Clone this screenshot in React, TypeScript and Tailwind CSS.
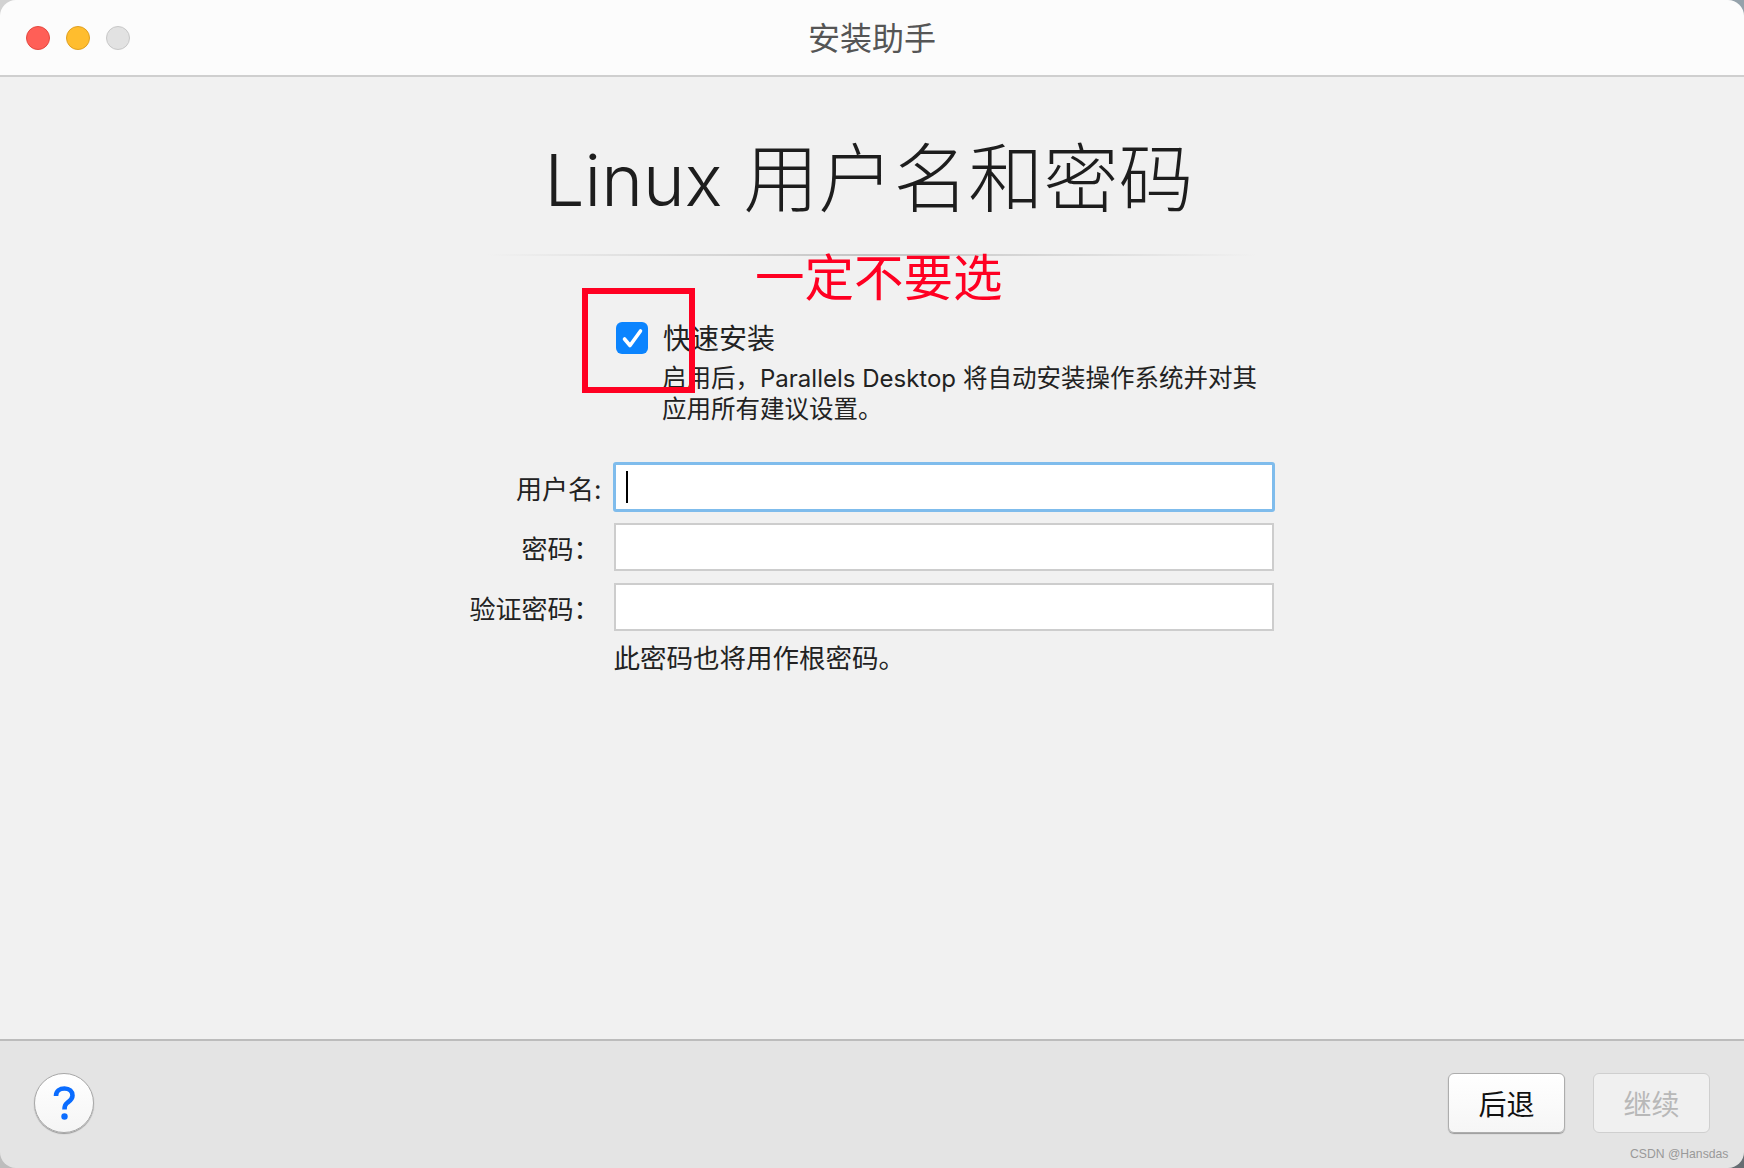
const FONT = "font-['Inter','Noto_Sans_CJK_SC',sans-serif]";

function Field({ label, focused, colonGap }: { label: string; focused?: boolean; colonGap?: boolean }) {
  return (
    <div className="flex h-[48px] items-center">
      <div className={`mt-[5px] w-[164px] text-right text-[26px] leading-[48px] text-[#222] ${colonGap ? "pr-[12px]" : "pr-[14px]"}`}>
        {label}
      </div>
      {focused ? (
        <div className="ml-[-1px] flex h-[50px] w-[662px] shrink-0 items-center rounded-[3px] border-[3px] border-[#7fbcec] bg-white pl-[10px]">
          <div className="h-[32px] w-[2px] bg-black" />
        </div>
      ) : (
        <div className="h-[48px] w-[660px] border-2 border-[#cdcdcd] bg-white" />
      )}
    </div>
  );
}

export default function App() {
  return (
    <div className={`relative h-[1168px] w-[1744px] overflow-hidden bg-[#e8e8e8] ${FONT}`}>
      {/* what shows behind the rounded corners of the window */}
      <div className="absolute left-0 top-0 h-[20px] w-[20px] bg-[#d2d2d2]" />
      <div className="absolute right-0 top-0 h-[20px] w-[20px] bg-[#95a2ab]" />
      <div className="absolute bottom-0 left-0 h-[20px] w-[20px] bg-[#bdbdbd]" />
      <div className="absolute bottom-0 right-0 h-[20px] w-[20px] bg-[#666d72]" />

      <div className="relative flex h-full flex-col overflow-hidden rounded-[16px]">
        <header className="relative flex h-[77px] shrink-0 items-center justify-center border-b-2 border-[#cfcfcf] bg-[#fcfcfc]">
          <div className="absolute left-[26px] top-[26px] flex gap-4">
            <div className="h-[24px] w-[24px] rounded-full border border-[#e5483f] bg-[#ff5f57]" />
            <div className="h-[24px] w-[24px] rounded-full border border-[#e0a020] bg-[#ffbd2e]" />
            <div className="h-[24px] w-[24px] rounded-full border border-[#c8c8c8] bg-[#e2e2e2]" />
          </div>
          <span className="mt-[2px] text-[32px] leading-none text-[#555]">安装助手</span>
        </header>

        <main className="flex flex-1 flex-col items-center bg-[#f1f1f1]">
          <h1 className="mt-[54px] ml-[-6px] text-[75px] leading-[96px] font-light whitespace-nowrap text-[#1d1d1d]">
            <span className="text-[71px]">Linux</span> 用户名和密码
          </h1>
          <div className="mt-[26px] h-[2px] w-[770px] bg-gradient-to-r from-transparent via-[#c4c4c4] to-transparent" />

          <div className="mt-[56px] ml-[148px] flex w-[660px] items-start gap-[15px]">
            <div className="mt-[10px] flex h-[32px] w-[32px] shrink-0 items-center justify-center rounded-[6px] bg-[#0b84fe]">
              <svg viewBox="0 0 32 32" className="h-[32px] w-[32px]" fill="none">
                <path d="M8.5 17l5.5 6.5L24.5 9" stroke="white" strokeWidth="3.6" strokeLinecap="round" strokeLinejoin="round" />
              </svg>
            </div>
            <div className="mt-[7px] text-[#222]">
              <div className="text-[28px] leading-[40px]">快速安装</div>
              <div className="mt-[4px] ml-[-1px] text-[24.5px] leading-[30px] whitespace-nowrap">
                启用后，<span className="text-[24px]">Parallels Desktop</span> 将自动安装操作系统并对其
                <br />
                应用所有建议设置。
              </div>
            </div>
          </div>

          <div className="mt-[39px] ml-[-20px] flex flex-col gap-[12px]">
            <Field label="用户名:" focused colonGap />
            <Field label="密码：" />
            <Field label="验证密码：" />
            <div className="mt-[-5px] ml-[164px] text-[26.5px] leading-[40px] text-[#222]">此密码也将用作根密码。</div>
          </div>
        </main>

        <footer className="flex h-[129px] shrink-0 items-center justify-between border-t-2 border-[#bcbcbc] bg-[#e4e4e4] px-[34px] pb-[3px]">
          <div className="h-[60px] w-[60px] rounded-full border border-[#a8a8a8] bg-gradient-to-b from-white to-[#f5f5f5] shadow-[0_1px_1px_#999]">
            <svg viewBox="0 0 58 58" className="h-full w-full" fill="none">
              <path
                d="M21 22C21 17 25 14.5 29.5 14.5C34.5 14.5 37.5 17.5 37.5 21.5C37.5 25.5 34.5 27 32 29C30 30.5 29.5 31.5 29.5 35.5"
                stroke="#0a6cff"
                strokeWidth="4.6"
              />
              <circle cx="29.5" cy="42.5" r="3.2" fill="#0a6cff" />
            </svg>
          </div>
          <div className="flex gap-[28px]">
            <button className="h-[60px] w-[117px] rounded-[6px] border border-[#adadad] bg-gradient-to-b from-white to-[#f6f6f6] pt-[3px] text-[28px] text-[#111] shadow-[0_1px_1px_#999]">
              后退
            </button>
            <button className="h-[60px] w-[117px] rounded-[6px] border border-[#cfcfcf] bg-[#f0f0f0] pt-[3px] text-[28px] text-[#b8b8b8]">
              继续
            </button>
          </div>
        </footer>
      </div>

      {/* annotations added on top of the screenshot */}
      <div className="absolute left-[582px] top-[288px] h-[105px] w-[113px] border-[6px] border-[#ff0022]" />
      <div className="absolute left-[755px] top-[246px] text-[49.5px] leading-[64px] text-[#ff0022]">一定不要选</div>
      <div className="absolute left-[1630px] top-[1145px] font-['Liberation_Sans',sans-serif] text-[12.2px] leading-[18px] text-[#999]">
        CSDN @Hansdas
      </div>
    </div>
  );
}
